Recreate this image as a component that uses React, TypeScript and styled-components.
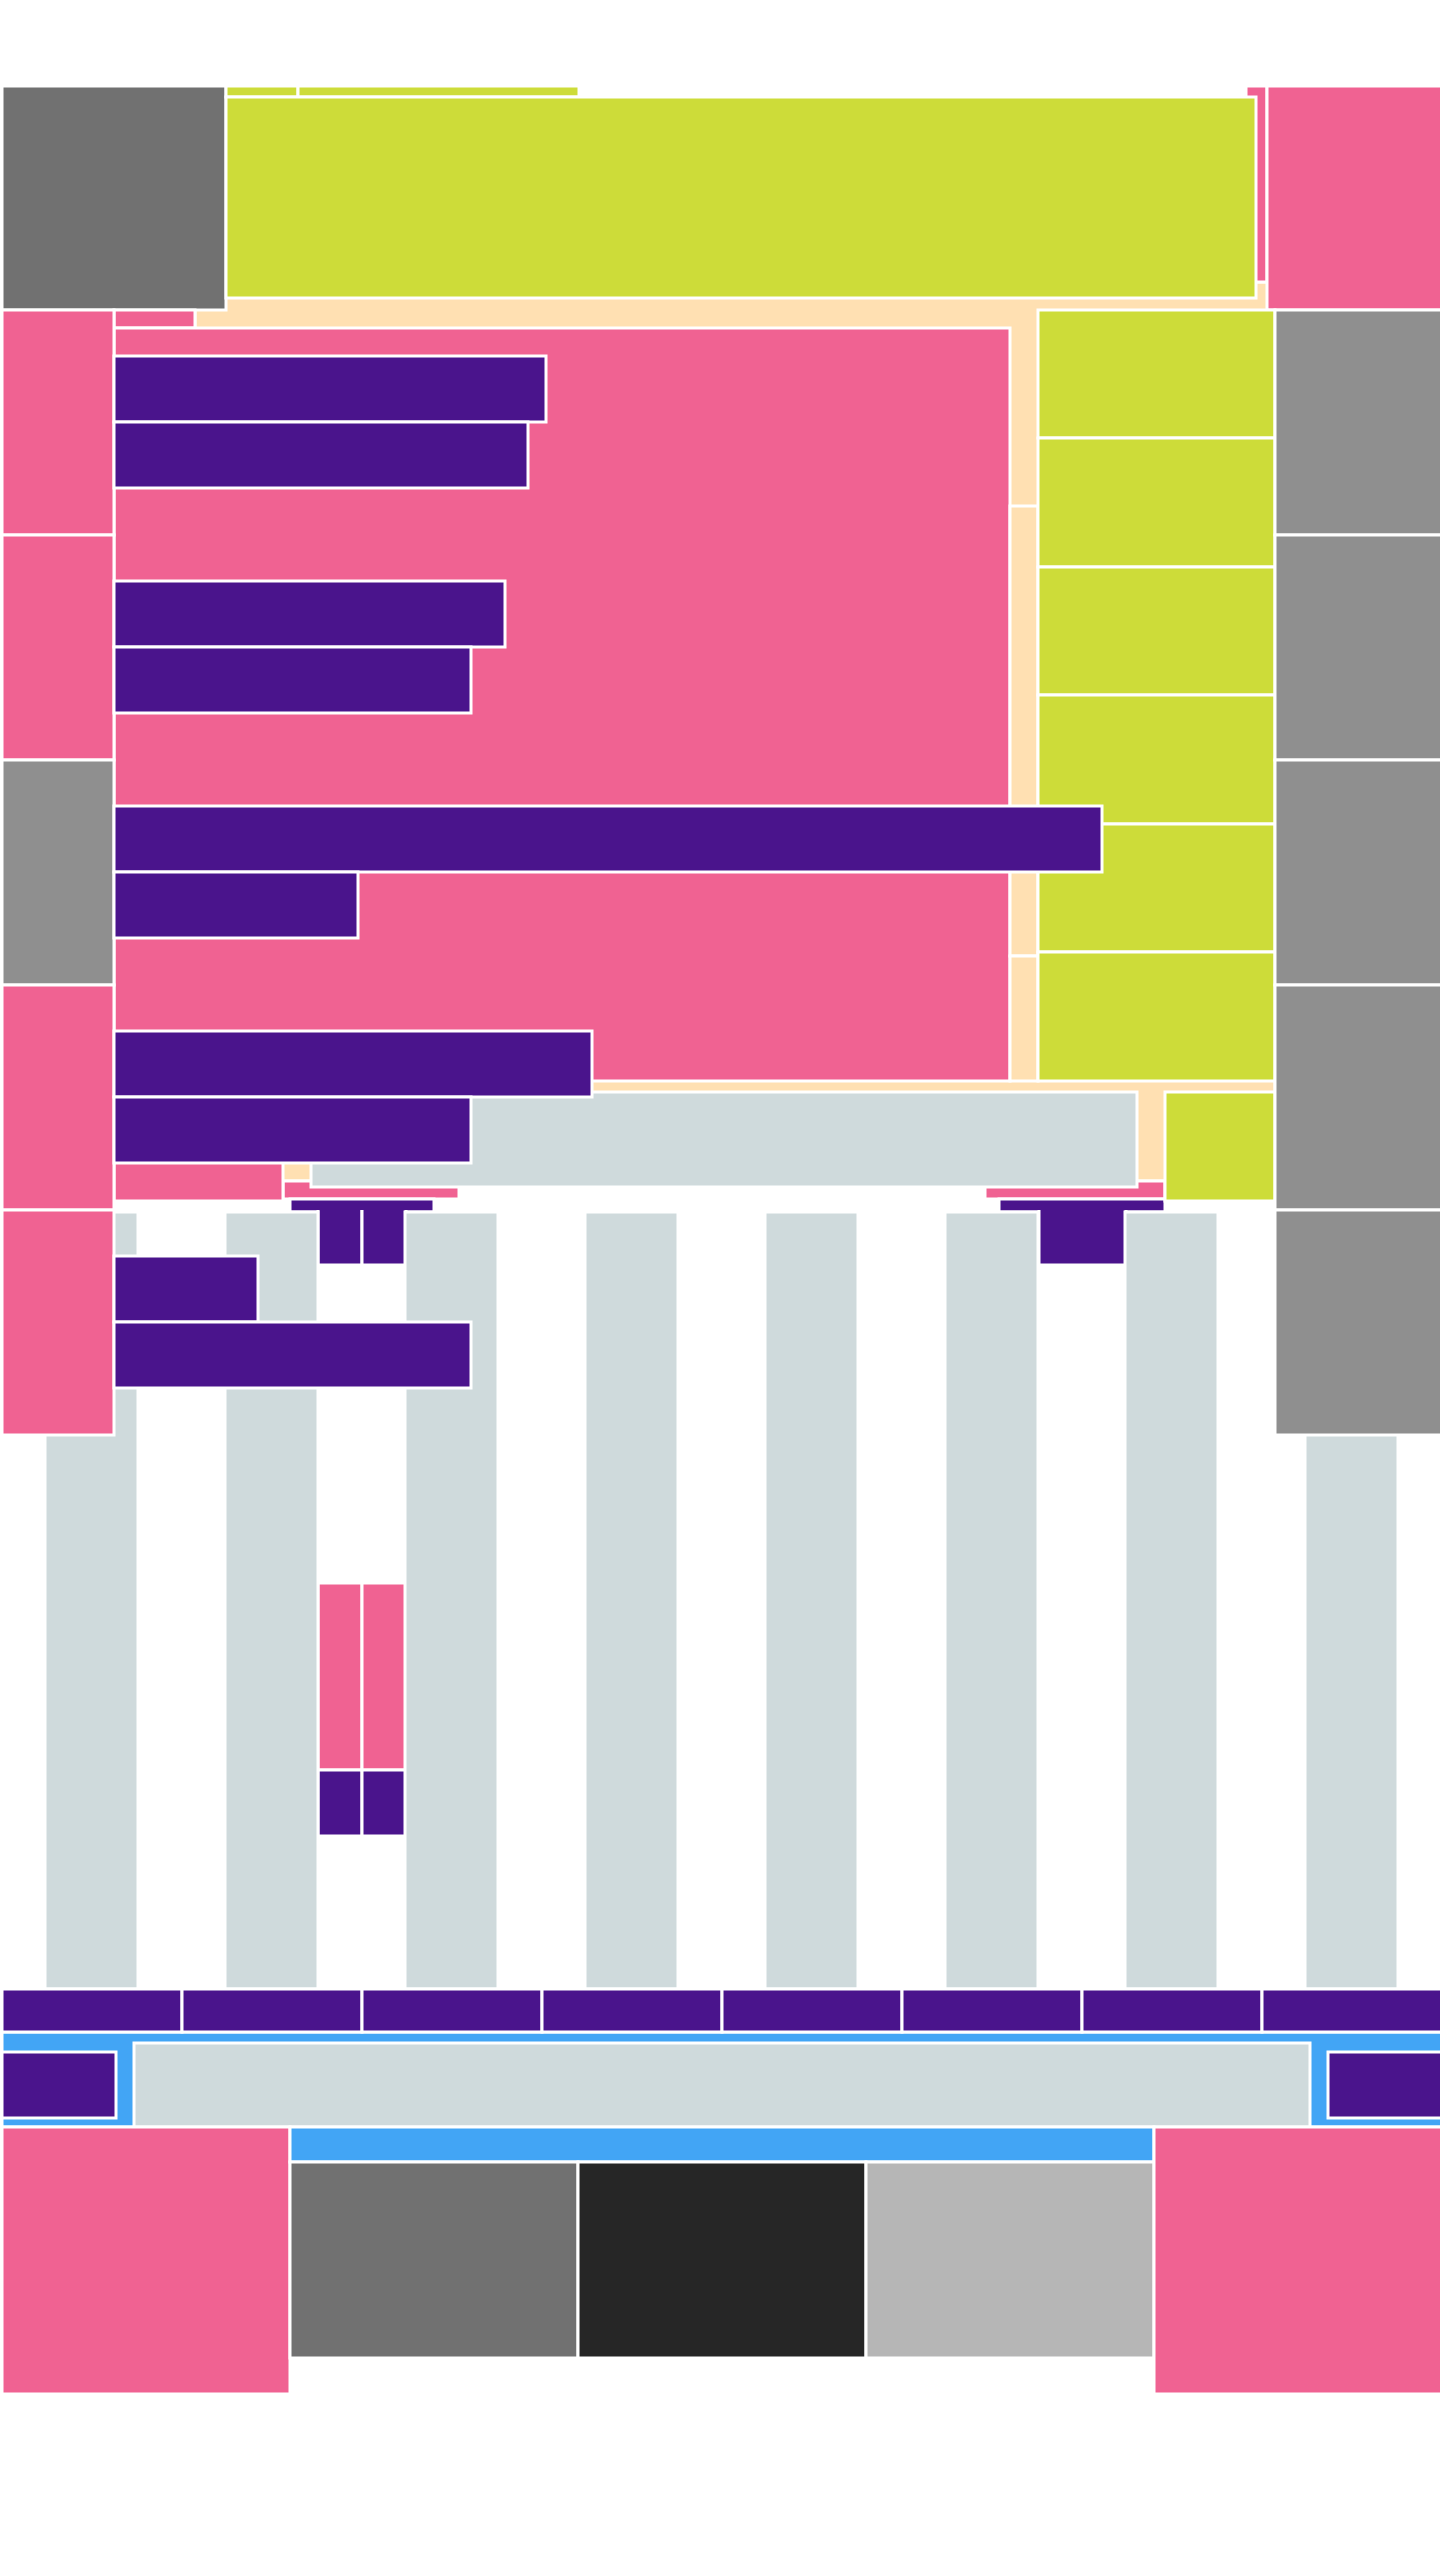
import styled, { createGlobalStyle, css } from "styled-components";

const colors = {
  pink: "#f06292",
  lime: "#cddc39",
  purple: "#4a148c",
  peach: "#ffe0b2",
  mist: "#cfdadc",
  blue: "#42a5f5",
  slate: "#717171",
  stone: "#8f8f8f",
  ink: "#262626",
  silver: "#b6b6b6",
};

type Tone = keyof typeof colors;

// every block gets a 3px white edge centred on its outline
const stroke = css`
  flex: none;
  box-shadow: 0 0 0 1.5px #fff, inset 0 0 0 1.5px #fff;
`;

const GlobalStyle = createGlobalStyle`
  html, body {
    margin: 0;
    padding: 0;
    overflow: hidden;
    background: #fff;
  }
  body {
    font-family: "Liberation Sans", Arial, sans-serif;
  }
  * {
    box-sizing: border-box;
  }
`;

const Page = styled.div`
  width: 1440px;
  margin-left: 1.5px;
  padding-top: 85.5px;
`;

const Stage = styled.div`
  display: grid;

  & > * {
    grid-area: 1 / 1;
    align-self: start;
  }
`;

/* ---------- header ---------- */

const Header = styled.header`
  display: flex;
  align-items: flex-start;
  height: 224px;
`;

const Logo = styled.div`
  width: 224px;
  height: 224px;
  background: ${colors.slate};
  ${stroke}
`;

const Nav = styled.nav`
  width: 1020px;
  flex: none;
  display: flex;
  flex-direction: column;
`;

const NavLinks = styled.div`
  display: flex;
  height: 11px;
`;

const NavLink = styled.a<{ $w: number }>`
  display: block;
  width: ${(p) => p.$w}px;
  height: 11px;
  background: ${colors.lime};
  ${stroke}
`;

const Hero = styled.div`
  position: relative;
  z-index: 1;
  width: 1030px;
  height: 201px;
  background: ${colors.lime};
  ${stroke}
`;

const Ribbon = styled.div`
  width: 21px;
  height: 196px;
  background: ${colors.pink};
  ${stroke}
`;

const Promo = styled.div`
  width: 175px;
  height: 224px;
  background: ${colors.pink};
  ${stroke}
`;

/* ---------- main panel ---------- */

const Backdrop = styled.main`
  margin: 196px 0 0 193px;
  width: 1080px;
  height: 899px;
  background: ${colors.peach};
  ${stroke}
`;

const Body = styled.div`
  margin-top: 224px;
  padding-left: 112px;
  display: flex;
  align-items: flex-start;
`;

const Center = styled.div`
  width: 896px;
  flex: none;
  display: flex;
  flex-direction: column;
`;

const Crumb = styled.div`
  width: 81px;
  height: 18px;
  background: ${colors.pink};
  ${stroke}
`;

const Card = styled.section`
  height: 753px;
  background: ${colors.pink};
  ${stroke}
`;

const Gutter = styled.div`
  width: 28px;
  flex: none;
  padding-top: 196.5px;
  display: flex;
  flex-direction: column;
`;

const GutterCell = styled.div<{ $h: number }>`
  height: ${(p) => p.$h}px;
  background: ${colors.peach};
  ${stroke}
`;

const Aside = styled.aside`
  width: 237px;
  flex: none;
  display: flex;
  flex-direction: column;
`;

const AsideCell = styled.div`
  height: 128.5px;
  background: ${colors.lime};
  ${stroke}
`;

/* ---------- dropdown menus ---------- */

const Menus = styled.div`
  margin-top: 1095px;
  display: flex;
  align-items: flex-start;
`;

const Menu = styled.div<{ $x: number; $w: number }>`
  margin-left: ${(p) => p.$x}px;
  width: ${(p) => p.$w}px;
  flex: none;
  display: flex;
  flex-direction: column;
  align-items: flex-start;
`;

const MenuLabel = styled.div`
  width: 100%;
  height: 18px;
  background: ${colors.pink};
  ${stroke}
`;

const MenuBar = styled.div<{ $x: number; $w: number }>`
  margin-left: ${(p) => p.$x}px;
  width: ${(p) => p.$w}px;
  height: 13px;
  background: ${colors.purple};
  ${stroke}
`;

const Stems = styled.div<{ $x: number }>`
  margin-left: ${(p) => p.$x}px;
  margin-top: -1.5px;
  display: flex;
`;

const Stem = styled.div<{ $w: number }>`
  width: ${(p) => p.$w}px;
  flex: none;
  display: flex;
  flex-direction: column;
`;

const StemHead = styled.div`
  height: 54.5px;
  background: ${colors.purple};
  box-shadow: 1.5px 0 #fff, -1.5px 0 #fff, 0 1.5px #fff,
    inset 1.5px 0 #fff, inset -1.5px 0 #fff, inset 0 -1.5px #fff;
`;

const StemGap = styled.div`
  height: 318px;
`;

const StemBody = styled.div`
  height: 187px;
  background: ${colors.pink};
  ${stroke}
`;

const StemFoot = styled.div`
  height: 66px;
  background: ${colors.purple};
  ${stroke}
`;

/* ---------- tray under the card ---------- */

const Tray = styled.div`
  margin-top: 1006px;
  padding-left: 112px;
  display: flex;
  align-items: flex-start;
`;

const Tab = styled.div`
  margin-top: 70px;
  width: 169px;
  height: 39px;
  background: ${colors.pink};
  ${stroke}
`;

const Well = styled.div`
  margin-left: 28px;
  width: 826px;
  height: 95px;
  background: ${colors.mist};
  ${stroke}
`;

const Badge = styled.div`
  margin-left: 28px;
  width: 110px;
  height: 109px;
  background: ${colors.lime};
  ${stroke}
`;

/* ---------- column grid ---------- */

const Columns = styled.div`
  padding-top: 1126px;
  display: grid;
  grid-template-columns: repeat(8, 180px);
`;

const Column = styled.div`
  margin-left: 43px;
  width: 93px;
  height: 777px;
  background: ${colors.mist};
  ${stroke}
`;

/* ---------- feed list + rail ---------- */

const Feed = styled.div`
  margin-top: 224px;
  display: flex;
  justify-content: space-between;
  align-items: flex-start;
`;

const FeedList = styled.ul`
  margin: 0;
  padding: 0;
  list-style: none;
  display: flex;
  flex-direction: column;
`;

const FeedItem = styled.li`
  display: flex;
  height: 225px;
`;

const Thumb = styled.div<{ $tone: Tone }>`
  width: 112px;
  height: 225px;
  background: ${(p) => colors[p.$tone]};
  ${stroke}
`;

const FeedText = styled.div`
  padding-top: 46px;
  display: flex;
  flex-direction: column;
  align-items: flex-start;
`;

const Line = styled.div<{ $w: number }>`
  width: ${(p) => p.$w}px;
  height: 66px;
  background: ${colors.purple};
  ${stroke}
`;

const Rail = styled.div`
  width: 167px;
  flex: none;
  display: flex;
  flex-direction: column;
`;

const RailCard = styled.div`
  height: 225px;
  background: ${colors.stone};
  ${stroke}
`;

/* ---------- tabs, search, footer ---------- */

const Tabs = styled.div`
  display: grid;
  grid-template-columns: repeat(8, 180px);
`;

const TabItem = styled.div`
  height: 43px;
  background: ${colors.purple};
  ${stroke}
`;

const SearchBar = styled.form`
  margin: 0;
  height: 95px;
  display: flex;
  align-items: flex-start;
  background: ${colors.blue};
  ${stroke}
`;

const SearchButton = styled.button`
  margin-top: 20px;
  width: 114px;
  height: 66px;
  border: 0;
  padding: 0;
  background: ${colors.purple};
  ${stroke}
`;

const SearchInput = styled.input`
  margin: 11px 18px 0;
  width: 1176px;
  height: 84px;
  border: 0;
  padding: 0;
  outline: none;
  background: ${colors.mist};
  ${stroke}
`;

const Footer = styled.footer`
  display: flex;
  height: 267px;
`;

const FooterSide = styled.div`
  width: 288px;
  height: 267px;
  background: ${colors.pink};
  ${stroke}
`;

const FooterMiddle = styled.div`
  width: 864px;
  flex: none;
  display: flex;
  flex-direction: column;
`;

const FooterStrip = styled.div`
  height: 35px;
  background: ${colors.blue};
  ${stroke}
`;

const Gallery = styled.div`
  display: flex;
`;

const Photo = styled.div<{ $tone: Tone }>`
  width: 288px;
  height: 196px;
  background: ${(p) => colors[p.$tone]};
  ${stroke}
`;

const feed: { tone: Tone; lines: [number, number] }[] = [
  { tone: "pink", lines: [432, 414] },
  { tone: "pink", lines: [391, 357] },
  { tone: "stone", lines: [988, 244] },
  { tone: "pink", lines: [478, 357] },
  { tone: "pink", lines: [144, 357] },
];

const eight = [0, 1, 2, 3, 4, 5, 6, 7];

export default function App() {
  return (
    <Page>
      <GlobalStyle />
      <Stage>
        <Backdrop />

        <Header>
          <Logo />
          <Nav>
            <NavLinks>
              <NavLink $w={72} />
              <NavLink $w={281} />
            </NavLinks>
            <Hero />
          </Nav>
          <Ribbon />
          <Promo />
        </Header>

        <Body>
          <Center>
            <Crumb />
            <Card />
          </Center>
          <Gutter>
            <GutterCell $h={450} />
            <GutterCell $h={124.5} />
          </Gutter>
          <Aside>
            {[0, 1, 2, 3, 4, 5].map((i) => (
              <AsideCell key={i} />
            ))}
          </Aside>
        </Body>

        <Menus>
          <Menu $x={281} $w={176}>
            <MenuLabel />
            <MenuBar $x={7} $w={144} />
            <Stems $x={35}>
              {[0, 1].map((i) => (
                <Stem key={i} $w={44}>
                  <StemHead />
                  <StemGap />
                  <StemBody />
                  <StemFoot />
                </Stem>
              ))}
            </Stems>
          </Menu>
          <Menu $x={526} $w={180}>
            <MenuLabel />
            <MenuBar $x={14} $w={166} />
            <Stems $x={54}>
              <Stem $w={87}>
                <StemHead />
              </Stem>
            </Stems>
          </Menu>
        </Menus>

        <Tray>
          <Tab />
          <Well />
          <Badge />
        </Tray>

        <Columns>
          {eight.map((i) => (
            <Column key={i} />
          ))}
        </Columns>

        <Feed>
          <FeedList>
            {feed.map((item, i) => (
              <FeedItem key={i}>
                <Thumb $tone={item.tone} />
                <FeedText>
                  <Line $w={item.lines[0]} />
                  <Line $w={item.lines[1]} />
                </FeedText>
              </FeedItem>
            ))}
          </FeedList>
          <Rail>
            {[0, 1, 2, 3, 4].map((i) => (
              <RailCard key={i} />
            ))}
          </Rail>
        </Feed>
      </Stage>

      <Tabs>
        {eight.map((i) => (
          <TabItem key={i} />
        ))}
      </Tabs>

      <SearchBar onSubmit={(e) => e.preventDefault()}>
        <SearchButton type="button" aria-label="menu" />
        <SearchInput readOnly aria-label="search" />
        <SearchButton type="submit" aria-label="search" />
      </SearchBar>

      <Footer>
        <FooterSide />
        <FooterMiddle>
          <FooterStrip />
          <Gallery>
            <Photo $tone="slate" />
            <Photo $tone="ink" />
            <Photo $tone="silver" />
          </Gallery>
        </FooterMiddle>
        <FooterSide />
      </Footer>
    </Page>
  );
}
